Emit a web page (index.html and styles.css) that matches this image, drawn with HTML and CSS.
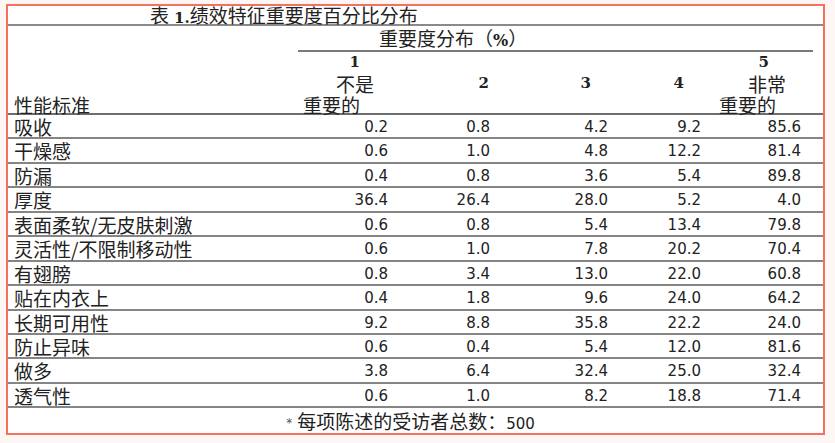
FILE: index.html
```html
<!DOCTYPE html>
<html lang="zh-CN">
<head>
<meta charset="utf-8">
<title>表 1.绩效特征重要度百分比分布</title>
<link rel="stylesheet" href="styles.css">
</head>
<body>
<div class="frame">
  <div class="title-row"><span class="cjk">表</span> <b class="num-b">1.</b><span class="cjk">绩效特征重要度百分比分布</span></div>
  <div class="group-row">
    <div></div>
    <div class="group-cell"><span class="cjk">重要度分布（</span><b class="num-b pct">%</b><span class="cjk">）</span></div>
  </div>
  <div class="head-row">
    <div class="label-h cjk">性能标准</div>
    <div class="h h1">
      <div class="l1 num-b">1</div>
      <div class="l2 cjk">不是</div>
      <div class="l3 cjk">重要的</div>
    </div>
    <div class="h h2"><div class="mid num-b">2</div></div>
    <div class="h h3"><div class="mid num-b">3</div></div>
    <div class="h h4"><div class="mid num-b">4</div></div>
    <div class="h h5">
      <div class="l1 num-b">5</div>
      <div class="l2 cjk">非常</div>
      <div class="l3 cjk">重要的</div>
    </div>
  </div>

  <div class="row"><div class="label">吸收</div><div class="n">0.2</div><div class="n">0.8</div><div class="n">4.2</div><div class="n">9.2</div><div class="n n5">85.6</div></div>
  <div class="row"><div class="label">干燥感</div><div class="n">0.6</div><div class="n">1.0</div><div class="n">4.8</div><div class="n">12.2</div><div class="n n5">81.4</div></div>
  <div class="row"><div class="label">防漏</div><div class="n">0.4</div><div class="n">0.8</div><div class="n">3.6</div><div class="n">5.4</div><div class="n n5">89.8</div></div>
  <div class="row"><div class="label">厚度</div><div class="n">36.4</div><div class="n">26.4</div><div class="n">28.0</div><div class="n">5.2</div><div class="n n5">4.0</div></div>
  <div class="row"><div class="label">表面柔软/无皮肤刺激</div><div class="n">0.6</div><div class="n">0.8</div><div class="n">5.4</div><div class="n">13.4</div><div class="n n5">79.8</div></div>
  <div class="row"><div class="label">灵活性/不限制移动性</div><div class="n">0.6</div><div class="n">1.0</div><div class="n">7.8</div><div class="n">20.2</div><div class="n n5">70.4</div></div>
  <div class="row"><div class="label">有翅膀</div><div class="n">0.8</div><div class="n">3.4</div><div class="n">13.0</div><div class="n">22.0</div><div class="n n5">60.8</div></div>
  <div class="row"><div class="label">贴在内衣上</div><div class="n">0.4</div><div class="n">1.8</div><div class="n">9.6</div><div class="n">24.0</div><div class="n n5">64.2</div></div>
  <div class="row"><div class="label">长期可用性</div><div class="n">9.2</div><div class="n">8.8</div><div class="n">35.8</div><div class="n">22.2</div><div class="n n5">24.0</div></div>
  <div class="row"><div class="label">防止异味</div><div class="n">0.6</div><div class="n">0.4</div><div class="n">5.4</div><div class="n">12.0</div><div class="n n5">81.6</div></div>
  <div class="row"><div class="label">做多</div><div class="n">3.8</div><div class="n">6.4</div><div class="n">32.4</div><div class="n">25.0</div><div class="n n5">32.4</div></div>
  <div class="row"><div class="label">透气性</div><div class="n">0.6</div><div class="n">1.0</div><div class="n">8.2</div><div class="n">18.8</div><div class="n n5">71.4</div></div>

  <div class="footer"><span class="star">*</span> <span class="cjk">每项陈述的受访者总数：</span><span class="num">500</span></div>
</div>
</body>
</html>
```

FILE: styles.css
```css
html, body {
  margin: 0;
  padding: 0;
  background: #fdf6f5;
}

body {
  color: #222222;
  font-family: "DejaVu Sans", "Noto Sans CJK SC", sans-serif;
}

.frame {
  box-sizing: border-box;
  margin: 4px 0 0 6px;
  width: 819px;
  height: 431px;
  border: 2px solid #f2725f;
  background: #ffffff;
}

.cjk {
  font-family: "Noto Sans CJK SC", sans-serif;
  font-size: 19px;
}

.num-b {
  font-family: "DejaVu Serif", serif;
  font-weight: bold;
  font-size: 15px;
}

.pct {
  font-size: 16px;
}

.num {
  font-family: "DejaVu Sans", sans-serif;
  font-size: 15px;
}

.title-row {
  box-sizing: border-box;
  height: 20px;
  line-height: 18px;
  padding-left: 142px;
  border-bottom: 2px solid #8a8a8a;
  white-space: nowrap;
}

.group-row {
  display: grid;
  grid-template-columns: 290px 1fr;
  height: 26px;
}

.group-cell {
  box-sizing: border-box;
  margin-right: 10px;
  height: 26px;
  line-height: 24px;
  padding-left: 81px;
  border-bottom: 2px solid #7a7a7a;
  white-space: nowrap;
}

.head-row,
.row {
  display: grid;
  grid-template-columns: 290px 100px 102px 118px 93px 112px;
}

.head-row {
  box-sizing: border-box;
  height: 63px;
  border-bottom: 2px solid #6e6e6e;
  line-height: 21px;
}

.label-h {
  padding: 42px 0 0 6px;
}

.h {
  text-align: right;
}

.h .mid {
  padding-top: 21px;
}

.h1 .l1 { padding-right: 38px; }
.h1 .l2 { padding-right: 24px; }
.h1 .l3 { padding-right: 38px; }

.h2 .mid { padding-right: 11px; }
.h3 .mid { padding-right: 27px; }
.h4 .mid { padding-right: 27px; }

.h5 .l1 { padding-right: 54px; }
.h5 .l2 { padding-right: 37px; }
.h5 .l3 { padding-right: 47px; }

.row {
  box-sizing: border-box;
  height: 24.45px;
  border-bottom: 2px solid #858585;
  line-height: 20.45px;
}

.label {
  padding: 2px 0 0 6px;
  font-family: "Noto Sans CJK SC", sans-serif;
  font-size: 19px;
  white-space: nowrap;
}

.n {
  padding: 2px 10px 0 0;
  text-align: right;
  font-family: "DejaVu Sans", sans-serif;
  font-size: 15px;
}

.n5 {
  padding-right: 22px;
}

.footer {
  padding: 3px 10px 0 0;
  line-height: 20px;
  text-align: center;
  white-space: nowrap;
}

.star {
  font-size: 12px;
  color: #555555;
  vertical-align: 2px;
}
```
